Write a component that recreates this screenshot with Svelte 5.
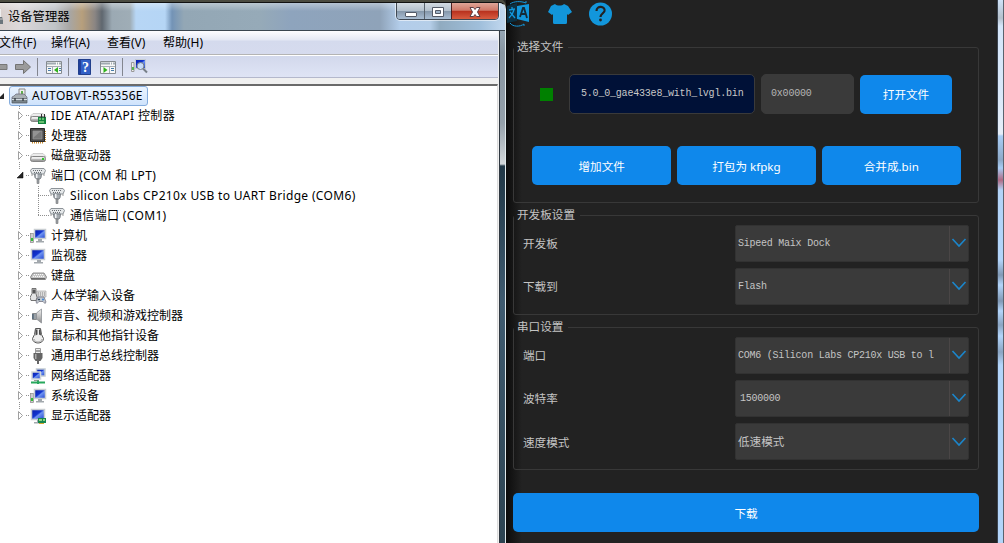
<script lang="ts">
    type Device = { label: string, icon: string, depth: number, open?: boolean, last?: boolean };

    let devices: Device[] = [
        { label: 'IDE ATA/ATAPI 控制器', icon: 'ide', depth: 1 },
        { label: '处理器', icon: 'cpu', depth: 1 },
        { label: '磁盘驱动器', icon: 'disk', depth: 1 },
        { label: '端口 (COM 和 LPT)', icon: 'port', depth: 1, open: true },
        { label: 'Silicon Labs CP210x USB to UART Bridge (COM6)', icon: 'port', depth: 2 },
        { label: '通信端口 (COM1)', icon: 'port', depth: 2, last: true },
        { label: '计算机', icon: 'computer', depth: 1 },
        { label: '监视器', icon: 'monitor', depth: 1 },
        { label: '键盘', icon: 'keyboard', depth: 1 },
        { label: '人体学输入设备', icon: 'hid', depth: 1 },
        { label: '声音、视频和游戏控制器', icon: 'sound', depth: 1 },
        { label: '鼠标和其他指针设备', icon: 'mouse', depth: 1 },
        { label: '通用串行总线控制器', icon: 'usb', depth: 1 },
        { label: '网络适配器', icon: 'network', depth: 1 },
        { label: '系统设备', icon: 'computer', depth: 1 },
        { label: '显示适配器', icon: 'display', depth: 1, last: true },
    ];

    let menus = ['文件(F)', '操作(A)', '查看(V)', '帮助(H)'];

    let boardRows = [
        { label: '开发板', value: 'Sipeed Maix Dock' },
        { label: '下载到', value: 'Flash' },
    ];
    let serialRows = [
        { label: '端口', value: 'COM6 (Silicon Labs CP210x USB to l' },
        { label: '波特率', value: '1500000', indent: true },
        { label: '速度模式', value: '低速模式', cjk: true },
    ];
</script>

<svg class="defs" width="0" height="0">
    <defs>
        <linearGradient id="screen" x1="0" y1="0" x2="1" y2="1">
            <stop offset="0" stop-color="#0a1fa8" />
            <stop offset="0.45" stop-color="#1234d0" />
            <stop offset="0.55" stop-color="#6f93f0" />
            <stop offset="1" stop-color="#1a3fd0" />
        </linearGradient>
        <linearGradient id="metal" x1="0" y1="0" x2="0" y2="1">
            <stop offset="0" stop-color="#f4f4f4" />
            <stop offset="1" stop-color="#8c8c8c" />
        </linearGradient>
    </defs>
</svg>

{#snippet icon(name: string)}
    <svg class="icon" width="17" height="16" viewBox="0 0 17 16">
        {#if name == 'root'}
            <path d="M8 7V1h6v7" fill="#eee" stroke="#888" />
            <path d="M10 3h2v4h-2z" fill="#5fae4c" />
            <path d="M3 8l2-2h8l3 3v2H1V9z" fill="#a9b0b4" stroke="#667" stroke-width=".7" />
            <path d="M1 11h15v4H1z" fill="#78838a" stroke="#4e565c" stroke-width=".7" />
            <path d="M1 11.500h15" stroke="#d3dbe0" />
            <path d="M4 10v3M12 10v3" stroke="#3d454a" stroke-width="1.500" />
        {:else if name == 'ide' || name == 'disk'}
            <path d="M3 5.500h10l3 3H0z" fill="#ececec" stroke="#bbb" stroke-width=".7" />
            <rect x=".5" y="8.500" width="15" height="5" rx="2" fill="url(#metal)" stroke="#858585" />
            <path d="M2 10h10" stroke="#fff" />
            {#if name == 'ide'}
                <path d="M8 9h8v7H8z" fill="#13853e" />
                <path d="M9 10h2v2H9zM12 10h2v2h-2zM9 13h5v2H9z" fill="#69bd70" />
                <path d="M11.500 6v4M14.500 6v4" stroke="#333" />
            {:else}
                <path d="M12 10h2v2h-2z" fill="#31c52c" />
            {/if}
        {:else if name == 'cpu'}
            <path d="M2 14.500h12M15 3v11" stroke="#c98a2b" stroke-width="2" stroke-dasharray="1 1" />
            <path d="M.5.5h14v13H.500z" fill="#4a4a4a" stroke="#2a2a2a" />
            <path d="M3 3h9v8H3z" fill="#777" stroke="#999" stroke-width=".7" />
            <path d="M3 10l8-7H3z" fill="#929292" />
        {:else if name == 'port'}
            <path d="M2 .5h12l1.500 2L14 6H2L.5 2.500z" fill="#e4e7e9" stroke="#8d9398" />
            <path d="M3 2.500h10M4 4.500h8" stroke="#6a6f74" stroke-dasharray="1 1" />
            <path d="M4.500 6h7l-.5 3.500-1 1.500H6.500L5 9.500z" fill="#a5abb0" stroke="#7b8187" />
            <path d="M6 6h1.500v4H6z" fill="#f0f2f5" />
            <path d="M7 11h2v4.500H7z" fill="#9aa0a5" stroke="#777" stroke-width=".6" />
            <path d="M2 6v2M14 6v2" stroke="#999" />
        {:else if name == 'computer' || name == 'monitor' || name == 'display'}
            {#if name == 'computer'}
                <rect x=".5" y="5.500" width="3" height="9" fill="#ccc" stroke="#888" stroke-width=".7" />
                <path d="M1 10h2v3H1z" fill="#31bd35" />
                <path d="M4.500 1.500h11v9h-11z" fill="url(#screen)" stroke="#c9ced2" stroke-width="1.500" />
                <path d="M8 11h4v2H8zM6 13h8v1.500H6z" fill="#a2a8ad" />
            {:else}
                <path d="M1.500 1.500h13v10h-13z" fill="url(#screen)" stroke="#c9ced2" stroke-width="1.500" />
                <path d="M7 12h4v2H7zM4 14h9v1.500H4z" fill="#a2a8ad" />
            {/if}
            {#if name == 'display'}
                <path d="M8 10h8v5H8z" fill="#16864f" />
                <path d="M9 11h3v2H9zM13 11h2v2h-2z" fill="#8fd37f" />
                <path d="M9 15.500h5" stroke="#d4a72c" />
            {/if}
        {:else if name == 'keyboard'}
            <path d="M3 5h11l2.500 4-1 2.500h-14L.5 9z" fill="#c6c6c6" stroke="#777" stroke-width=".8" />
            <path d="M4 6.500h10M3 8.500h11" stroke="#f8f8f8" stroke-dasharray="1 1" />
            <path d="M1 10.700h14" stroke="#555" />
        {:else if name == 'hid'}
            <path d="M7 3h9v6H7z" fill="#ddd" stroke="#aaa" stroke-width=".7" />
            <path d="M8 5h7M8 7h7" stroke="#888" stroke-dasharray="1 1" />
            <path d="M2 .5h4v5l1 4-1 3H1L0 9.500l2-4z" fill="#e4e4e4" stroke="#555" stroke-width=".8" />
            <path d="M2.500 1.500h3v4h-3z" fill="#555" />
            <path d="M8 9h6l2 5-1 1.500-2-2H9l-2 2L6 14z" fill="#c2c9cf" stroke="#667" stroke-width=".7" />
            <path d="M8 11.500h2M9 10.500v2" stroke="#234" stroke-width=".8" />
            <circle cx="13" cy="11.500" r="1" fill="#3b83d9" />
        {:else if name == 'sound'}
            <path d="M2.500 5.500h4v6h-4z" fill="#9aa0a5" stroke="#777" stroke-width=".8" />
            <path d="M6.500 5l5-4v14l-5-4z" fill="url(#metal)" stroke="#8d9195" stroke-width=".8" />
            <path d="M3 6v5" stroke="#33516b" />
        {:else if name == 'mouse'}
            <path d="M5.500.5h5l1 6 2 4c0 6-11 6-11 0l2-4z" fill="#eee" stroke="#555" />
            <path d="M5.500 1.500H7.500v5l-2 1zM9 1.500h1.500l.5 6-2-1z" fill="#4a4a4a" />
            <path d="M4 11c1 4 7 4 8 0" fill="none" stroke="#aaa" />
        {:else if name == 'usb'}
            <path d="M5.500.5h5v5h-5z" fill="#eee" stroke="#999" />
            <path d="M6.500 2h1v2h-1zM8.500 2h1v2h-1z" fill="#555" />
            <path d="M3.500 5h9v5l-2 3h-5l-2-3z" fill="#656565" />
            <path d="M5 6h1.500v5H5z" fill="#aaa" />
            <path d="M8 12v4" stroke="#666" stroke-width="2" />
        {:else if name == 'network'}
            <path d="M6.500 1h8.500v7H6.500z" fill="url(#screen)" stroke="#c2cbd2" stroke-width="1.500" />
            <path d="M2 4h8.500v7H2z" fill="url(#screen)" stroke="#d0d5d9" stroke-width="1.500" />
            <path d="M4 12h5v1H4z" fill="#999" />
            <path d="M1 14.500h14M8 12.500V16" stroke="#28a85d" stroke-width="2" />
        {/if}
    </svg>
{/snippet}

{#snippet twig(device: Device)}
    {@const w = device.depth == 1 ? 30 : 49}
    <svg class="twig" width={w} height="20" viewBox="0 0 {w} 20">
        <path class="dots" d="M19.500 0V{device.last && device.depth == 1 ? 10 : 20}" />
        {#if device.depth == 2}
            <path class="dots" d="M38.500 0V{device.last ? 10 : 20}M38 9.500H49" />
        {:else}
            <path class="dots" d="M26 9.500H30" />
            <path d="M17 4h7v12h-7z" fill="#fff" />
            {#if device.open}
                <path d="M23 6v6h-6z" fill="#262626" stroke="#000" stroke-width=".5" />
            {:else}
                <path d="M18.500 5.500v8l4-4z" fill="#fff" stroke="#a0a0a0" />
            {/if}
        {/if}
    </svg>
{/snippet}

{#snippet field(row)}
    <div class="field">
        <span class="name">{row.label}</span>
        <div class="select">
            <span class="value" class:indent={row.indent} class:cjk={row.cjk}>{row.value}</span>
            <span class="drop">
                <svg width="16" height="10" viewBox="0 0 16 10"><path d="M1.500 1l6.500 7 6.500-7" fill="none" stroke="#1b86cb" stroke-width="1.600" /></svg>
            </span>
        </div>
    </div>
{/snippet}

<div class="desktop">
    <div class="manager">
        <div class="titlebar">
            <svg width="4" height="16" viewBox="0 0 4 16"><path d="M0 0h1v8H0z" fill="#eee" /><path d="M0 8h2l1 2v5H0z" fill="#6c757b" /><path d="M0 10h3" stroke="#ccc" /></svg>
            <span class="title">设备管理器</span>
            <div class="controls">
                <span class="ctl"><svg width="14" height="14" viewBox="0 0 14 14"><rect x="1.500" y="6.500" width="11" height="4" rx=".5" fill="#fff" stroke="#545b68" /></svg></span>
                <span class="ctl max"><svg width="14" height="14" viewBox="0 0 14 14"><path d="M1.500 1.500h11v9h-11z" fill="#fff" stroke="#545b68" /><path d="M4.500 4.500h5v3h-5z" fill="#9fb4c8" stroke="#545b68" /></svg></span>
                <span class="ctl close"><svg width="14" height="14" viewBox="0 0 14 14"><path d="M2 1.500h3.500L7 3.500l1.500-2H12L9.500 6l2.500 4.500H8.500L7 8.500l-1.500 2H2L4.500 6z" fill="#fff" stroke="#5c4046" /></svg></span>
            </div>
        </div>
        <div class="client">
            <div class="menubar">
                {#each menus as menu}
                    <span>{menu}</span>
                {/each}
            </div>
            <div class="toolbar">
                <svg width="150" height="20" viewBox="0 0 150 20">
                    <path d="M-2 7.500h9v5h-9z" fill="#999" stroke="#777" />
                    <path d="M15.500 7.500h8v-4l7 6.500-7 6.500v-4h-8z" fill="#9b9b9b" stroke="#737373" />
                    <path d="M37.500 1v18M68.500 1v18M122.500 1v18" stroke="#83868f" />
                    <g>
                        <path d="M46.500 4.500h15v12h-15z" fill="#f7f7f7" stroke="#858b90" />
                        <path d="M47 6.500h14" stroke="#a0aab2" stroke-width="2" stroke-dasharray="9 1 1 1" />
                        <path d="M47 9.500h14M52.500 9v7" stroke="#a6adb5" />
                        <path d="M48 11.500h3M48 13.500h3M59 11.500h2M59 13.500h2" stroke="#467ba9" />
                        <path d="M58 10v6l-4-3z" fill="#2fb31c" />
                    </g>
                    <path d="M78.500 2.500h12v15h-12z" fill="#315fc6" stroke="#213f8c" />
                    <path d="M79 3h2v14h-2z" fill="#213f9c" />
                    <text x="85.500" y="15" text-anchor="middle" class="qmark">?</text>
                    <g>
                        <path d="M100.500 4.500h15v12h-15z" fill="#f7f7f7" stroke="#858b90" />
                        <path d="M101 6.500h14" stroke="#a0aab2" stroke-width="2" stroke-dasharray="9 1 1 1" />
                        <path d="M101 9.500h14M109.500 9v7" stroke="#a6adb5" />
                        <path d="M111 11.500h3M111 13.500h3" stroke="#467ba9" />
                        <path d="M103.500 10v6l4-3z" fill="#2fb31c" />
                    </g>
                    <path d="M131.500 5.500h2.500v9h-2.500z" fill="#eee" stroke="#999" /><path d="M132 10h2v3h-2z" fill="#55b54d" />
                    <path d="M135.500 2.500h10v9h-10z" fill="url(#screen)" stroke="#c8ced4" />
                    <circle cx="140.500" cy="9" r="3.500" fill="#d9ebfb" fill-opacity=".85" stroke="#777f88" />
                    <path d="M143 11.500l4 4" stroke="#777f88" stroke-width="2" />
                </svg>
            </div>
            <div class="strip"></div>
            <div class="tree">
                <div class="root">
                    <svg width="9" height="20" viewBox="0 0 9 20"><path d="M4 7v6h-6z" fill="#262626" /></svg>
                    <span class="selected">{@render icon('root')}<span class="latin">AUTOBVT-R55356E</span></span>
                </div>
                {#each devices as device}
                    <div class="node">
                        {@render twig(device)}
                        {@render icon(device.icon)}
                        <span class:latin={/[A-Z]/.test(device.label)}>{device.label}</span>
                    </div>
                {/each}
            </div>
        </div>
    </div>

    <div class="flasher">
        <div class="tools">
            <svg width="26" height="28" viewBox="0 0 26 28">
                <path d="M1 6l10-3v18L1 23z" fill="#0c3144" />
                <path d="M3 10l6-1M6 7v3M8 10c-1 4-3 6-5 8M4 12l5 6" stroke="#1296db" stroke-width="1.300" fill="none" />
                <path d="M11 6l12-2v18l-12-3z" fill="#1296db" />
                <path d="M14 17l3-9h1l3 10M15 14h5" stroke="#152a38" stroke-width="1.800" fill="none" />
                <path d="M4 4c4-3 11-3 16-1V1M4 23c3 4 10 4 14 1v2" stroke="#1296db" fill="none" />
            </svg>
            <svg width="26" height="28" viewBox="0 0 26 28">
                <path d="M8 4c2 2 7 2 9 0l4 2 4 6-4 3-1-1v8.500q0 1.500-1.500 1.500h-11Q6 24 6 22.500V14l-1 1-4-3 3-6z" fill="#1296db" />
            </svg>
            <svg width="26" height="28" viewBox="0 0 26 28">
                <circle cx="12.500" cy="14" r="11.500" fill="#1296db" />
                <path d="M8.500 11c0-6 9-5 8 0-.5 2-4 3-4 6" fill="none" stroke="#222" stroke-width="2.200" />
                <circle cx="12.500" cy="20" r="1.400" fill="#222" />
            </svg>
        </div>

        <fieldset class="files">
            <legend>选择文件</legend>
            <div class="filerow">
                <span class="check"></span>
                <div class="path">5.0_0_gae433e8_with_lvgl.bin</div>
                <div class="offset">0x00000</div>
                <button class="open">打开文件</button>
            </div>
            <div class="actions">
                <button>增加文件</button>
                <button>打包为 kfpkg</button>
                <button>合并成.bin</button>
            </div>
        </fieldset>

        <fieldset class="board">
            <legend>开发板设置</legend>
            {#each boardRows as row}
                {@render field(row)}
            {/each}
        </fieldset>

        <fieldset class="serial">
            <legend>串口设置</legend>
            {#each serialRows as row}
                {@render field(row)}
            {/each}
        </fieldset>

        <button class="download">下载</button>
    </div>
    <div class="behind"></div>
</div>

<style>
    :global(body) {
        background: #222;
        overflow: hidden;
    }
    .defs {
        position: absolute;
    }
    .desktop {
        display: grid;
        grid-template-columns: 506px 491px 7px;
        height: 543px;
        font-family: "Noto Sans", "Noto Sans CJK SC", sans-serif;
        font-size: 12px;
    }

    /* device manager */
    .manager {
        box-sizing: border-box;
        margin-top: 2px;
        height: 541px;
        padding-right: 5px;
        border-top: 1px solid #111;
        border-right: 1px solid #dfe8ea;
        border-radius: 0 7px 0 0;
        overflow: hidden;
        background: linear-gradient(#a9bccb 0, #8795a1 50px, #94a0aa 120px, #d2d7da 161px, #203746 163px, #3f5b70 300px, #2c4351 100%);
        box-shadow: 0 -3px 0 #4b4b40;
    }
    .titlebar {
        display: flex;
        align-items: center;
        height: 27px;
        margin-right: -5px;
        border-bottom: 1px solid #3a4650;
        background:
            linear-gradient(rgba(255, 255, 255, .35), rgba(255, 255, 255, 0) 30%),
            linear-gradient(90deg, #d8cfcc 0, #dcd8da 20px, #c0c4c8 55px, #a8a6a3 70px, #b79f7c 82px, #8a8583 95px, #5f676f 102px, #9ba9b3 112px, #9fadb6 130px, #b7d6f5 136px, #b5d5f5 165px, #7393b6 172px, #93a7b5 184px, #96aab8 260px, #8ea4bd 290px, #8fa3b9 380px, #b3cdea 400px, #b5cee8 430px, #90abc0 440px, #a0bfdb 480px, #c2d8ef 100%);
    }
    .title {
        margin: -2px 0 0 4px;
        font-size: 12.3px;
        color: #000;
    }
    .controls {
        display: flex;
        align-self: flex-start;
        box-sizing: border-box;
        height: 18px;
        margin: -1px 6px 0 auto;
        border: 1px solid #3f4852;
        border-radius: 0 0 4px 4px;
        overflow: hidden;
        box-shadow: 0 0 0 1px rgba(255, 255, 255, .55);
    }
    .ctl {
        display: flex;
        align-items: center;
        justify-content: center;
        width: 27px;
        background: linear-gradient(#d3dbe2, #b3c0cc 48%, #8496a9 50%, #a9bdd2);
    }
    .ctl svg {
        margin-top: 3px;
    }
    .max {
        width: 26px;
        border-left: 1px solid #59636d;
    }
    .close {
        width: 46px;
        border-left: 1px solid #4b2020;
        background: linear-gradient(#dfa698, #cf7867 46%, #b8301d 50%, #d85c40);
    }
    .client {
        box-sizing: border-box;
        width: 500px;
        height: 512px;
        border-right: 1px solid #303841;
        background: #f0f0f0;
    }
    .menubar {
        display: flex;
        align-items: center;
        gap: 16px;
        box-sizing: border-box;
        height: 24px;
        margin-right: 1px;
        border-bottom: 1px solid #b4b4b4;
        background: linear-gradient(#fdfdff, #e4e8f4 9px, #d4daed 10px, #d6dbee);
        font-size: 12px;
    }
    .menubar span {
        width: 40px;
        margin-top: -1px;
        white-space: nowrap;
    }
    .menubar span:first-child {
        width: 35px;
        text-indent: -1px;
    }
    .toolbar {
        display: flex;
        align-items: center;
        box-sizing: border-box;
        height: 23px;
        margin-right: 1px;
        border-top: 1px solid #fff;
        border-bottom: 1px solid #b4b8cc;
        background: linear-gradient(#d2d8ec, #dfe4f5);
    }
    .qmark {
        font: bold 14px "Liberation Serif", serif;
        fill: #fff;
    }
    .strip {
        height: 6px;
    }
    .tree {
        box-sizing: border-box;
        height: 459px;
        width: 498px;
        border-top: 2px solid #6a6a6a;
        border-right: 1px solid #dcdcdc;
        background: #fff;
    }
    .root, .node {
        display: flex;
        align-items: center;
        height: 20px;
        white-space: nowrap;
    }
    .node > span {
        margin: -2px 0 0 4px;
    }
    .selected {
        display: flex;
        align-items: center;
        gap: 4px;
        box-sizing: border-box;
        width: 139px;
        height: 20px;
        padding-left: 1px;
        border: 1px solid #84acdd;
        border-radius: 3px;
        background: linear-gradient(#eaf3fe, #cfe3fc);
    }
    .selected span {
        margin-top: -2px;
    }
    .latin {
        letter-spacing: 0.34px;
    }
    .icon, .twig {
        flex: none;
    }
    .dots {
        fill: none;
        stroke: #8f8f8f;
        stroke-dasharray: 1 1;
    }

    /* flashing tool */
    .flasher {
        box-sizing: border-box;
        padding: 0 18px 0 7px;
        background: linear-gradient(90deg, #0c0c0c, #222 16px);
        color: #c4c4c4;
        font-family: "Noto Sans", "Noto Sans CJK SC", sans-serif;
        font-size: 11.6px;
    }
    .tools {
        display: flex;
        gap: 15px;
        height: 39px;
        margin-left: -7px;
    }
    fieldset {
        box-sizing: border-box;
        min-width: 0;
        margin: 0;
        border: 1px solid #383838;
        border-radius: 3px;
        padding: 0 9px;
    }
    legend {
        height: 16px;
        line-height: 16px;
        padding: 0 5px 0 3px;
        margin-left: -9px;
    }
    .files {
        height: 164px;
        padding: 0 17px 0 18px;
    }
    .files legend {
        margin-left: -18px;
    }
    .filerow {
        display: flex;
        align-items: center;
        height: 40px;
        margin-top: 19px;
        padding-left: 8px;
    }
    .check {
        width: 13px;
        height: 13px;
        margin-right: 16px;
        background: #008000;
    }
    .path, .offset {
        box-sizing: border-box;
        height: 40px;
        border: 1px solid #3a3a3a;
        border-radius: 5px;
        font: 10px/38px "Liberation Mono", monospace;
        letter-spacing: -0.2px;
        color: #c8c8c8;
    }
    .path {
        width: 186px;
        padding-left: 11px;
        background: #001137;
    }
    .offset {
        width: 93px;
        margin: 0 6px;
        padding-left: 9px;
        background: #3a3a3a;
        color: #b4b4b4;
    }
    button {
        border: none;
        border-radius: 5px;
        padding: 0;
        background: #0f88eb;
        color: #fff;
        font: inherit;
    }
    .open {
        width: 92px;
        height: 39px;
    }
    .actions {
        display: grid;
        grid-template-columns: repeat(3, 1fr);
        gap: 5.500px;
        height: 39px;
        margin-top: 32px;
    }
    .board {
        height: 108px;
        margin-top: 4px;
    }
    .serial {
        height: 151px;
        margin-top: 4px;
    }
    .field {
        display: flex;
        align-items: center;
        justify-content: space-between;
        height: 36px;
        margin-bottom: 7.300px;
    }
    .board legend, .serial legend {
        margin-bottom: 2px;
    }
    .select {
        display: flex;
        box-sizing: border-box;
        width: 234px;
        height: 37px;
        border: 1px solid #323232;
        border-radius: 2px;
        background: #3a3a3a;
    }
    .value {
        flex: 1;
        padding-left: 2px;
        overflow: hidden;
        white-space: nowrap;
        font: 10px/36px "Liberation Mono", monospace;
        letter-spacing: -0.24px;
    }
    .indent {
        padding-left: 4px;
    }
    .cjk {
        font: 11.600px/34px "Noto Sans CJK SC", sans-serif;
        letter-spacing: 0;
    }
    .drop {
        display: flex;
        align-items: center;
        justify-content: center;
        width: 18px;
        border-left: 1px solid #4a4646;
    }
    .download {
        display: block;
        width: 100%;
        height: 39px;
        margin-top: 23px;
    }
    .behind {
        border-left: 1px solid #3b4450;
        border-right: 1px solid #59636e;
        background: linear-gradient(#cfe2f8 0, #b5c0cc 18px, #d5e6fa 26px, #d9e8fa 90px, #e6eef8 134px, #a9cdf5 136px, #8da9c8 160px, #a9cdf5 168px, #b06a84 180px, #b3d3f7 190px, #b3d5fa 260px, #8199b5 275px, #b3d5fa 285px, #8199b5 301px, #b3d5fa 311px, #8ba5c2 325px, #b3d5fa 336px, #8ba5c2 352px, #b3d5fa 365px);
    }
</style>
